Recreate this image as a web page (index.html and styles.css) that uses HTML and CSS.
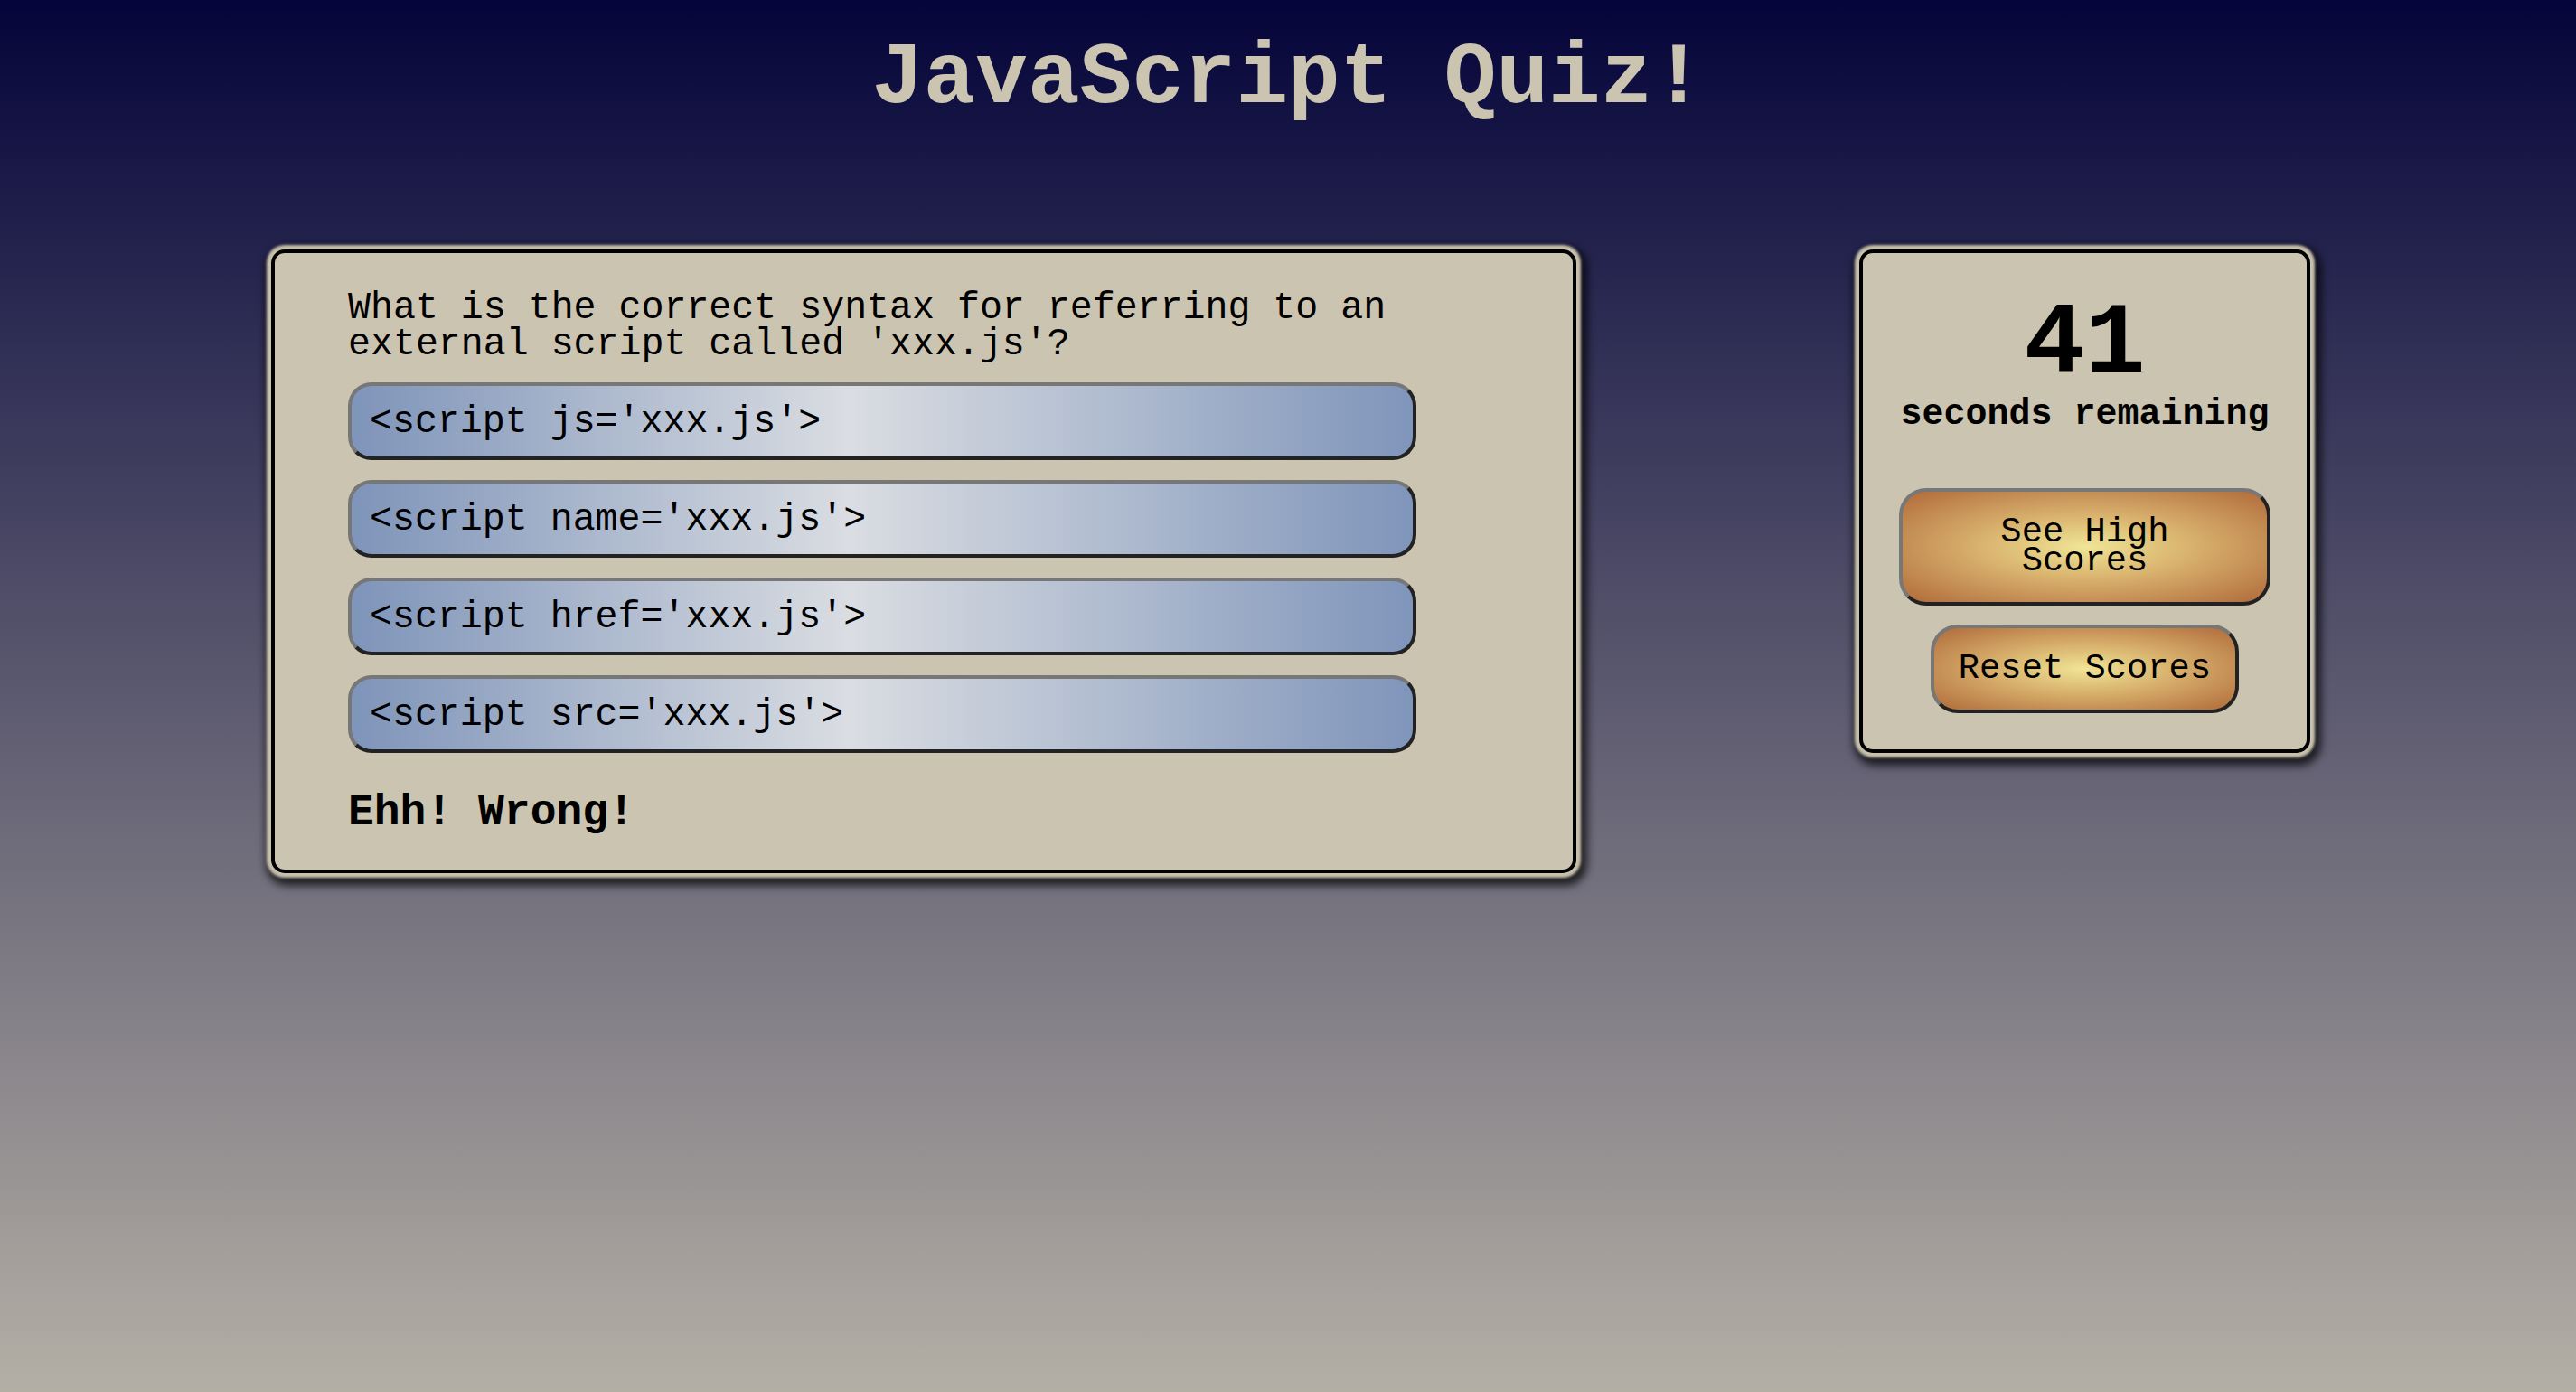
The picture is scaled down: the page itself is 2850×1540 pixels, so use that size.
FILE: index.html
```html
<!DOCTYPE html>
<html lang="en">
<head>
<meta charset="utf-8">
<title>JavaScript Quiz!</title>
<link rel="stylesheet" href="styles.css">
</head>
<body>
  <h1 class="title">JavaScript Quiz!</h1>
  <main class="layout">
    <section class="card quiz">
      <p class="question">What is the correct syntax for referring to an external script called 'xxx.js'?</p>
      <div class="answers">
        <button class="answer">&lt;script js='xxx.js'&gt;</button>
        <button class="answer">&lt;script name='xxx.js'&gt;</button>
        <button class="answer">&lt;script href='xxx.js'&gt;</button>
        <button class="answer">&lt;script src='xxx.js'&gt;</button>
      </div>
      <p class="feedback">Ehh! Wrong!</p>
    </section>
    <aside class="card side">
      <div class="timer">41</div>
      <div class="timer-label">seconds remaining</div>
      <div class="side-actions">
        <button class="gold-btn wide">See High<br>Scores</button>
        <button class="gold-btn">Reset Scores</button>
      </div>
    </aside>
  </main>
</body>
</html>
```
FILE: styles.css
```css
html, body {
  margin: 0;
  padding: 0;
  min-height: 100%;
}

body {
  min-height: 100vh;
  background: linear-gradient(to bottom, #04043a 0%, #b4afa5 100%);
  font-family: "Courier New", Courier, "Nimbus Mono PS", "Nimbus Mono L", FreeMono, "Liberation Mono", monospace;
  color: #000;
}

.title {
  margin: 0;
  padding-top: 33px;
  font-size: 96px;
  line-height: 110px;
  font-weight: bold;
  text-align: center;
  color: #cbc4b1;
}

.layout {
  display: flex;
  align-items: flex-start;
  gap: 313px;
  padding: 133px 0 0 300px;
}

.card {
  box-sizing: border-box;
  background: #cbc4b1;
  border: 4px solid #000;
  border-radius: 15px;
  box-shadow: 0 0 3px 5px #c8c1ae, 3px 5px 10px 9px rgba(0, 0, 0, 0.72);
}

.quiz {
  width: 1444px;
  padding: 41px 173px 36px 81px;
}

.question {
  margin: 0;
  font-size: 41.6px;
  line-height: 40px;
}

.answers {
  display: flex;
  flex-direction: column;
  gap: 22px;
  margin-top: 22px;
}

.answer {
  box-sizing: border-box;
  display: flex;
  align-items: center;
  width: 1182px;
  height: 86px;
  padding: 0 20px;
  font-family: inherit;
  font-size: 41.6px;
  color: #000;
  text-align: left;
  border: 4px solid;
  border-color: #777 #222 #222 #777;
  border-radius: 26px;
  background: linear-gradient(to right, #7e94b9 0%, #dadde2 47%, #7f95ba 100%);
}

.feedback {
  margin: 39px 0 0;
  font-size: 48px;
  font-weight: bold;
  line-height: 54px;
}

.side {
  width: 499px;
  padding: 47px 0 40px;
  display: flex;
  flex-direction: column;
  align-items: center;
}

.timer {
  font-size: 112px;
  font-weight: bold;
  line-height: 110px;
}

.timer-label {
  margin-top: 2px;
  font-size: 40px;
  font-weight: bold;
  line-height: 40px;
}

.side-actions {
  margin-top: 61px;
  display: flex;
  flex-direction: column;
  align-items: center;
  gap: 21px;
}

.gold-btn {
  box-sizing: border-box;
  padding: 29px 27px;
  font-family: inherit;
  font-size: 38.8px;
  line-height: 32px;
  color: #000;
  text-align: center;
  border: 4px solid;
  border-color: #777 #222 #222 #777;
  border-radius: 30px;
  background: radial-gradient(ellipse at center, #f0e596 0%, #d6ad6a 45%, #b06a3a 100%);
}

.gold-btn.wide {
  width: 411px;
}
```
